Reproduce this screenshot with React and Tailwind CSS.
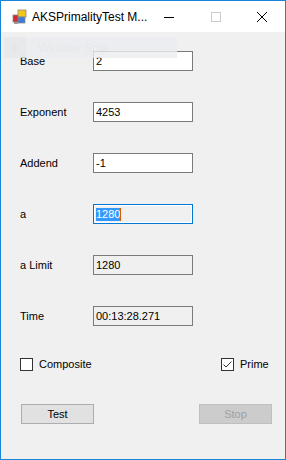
const font = { fontFamily: '"Liberation Sans", Arial, sans-serif' };

const Field = ({ label, value, variant = 'normal' }) => (
  <div className="flex items-center h-5">
    <div className="w-[73px] text-[11px] text-black pl-[19px] box-content">{label}</div>
    {variant === 'focus' ? (
      <div className="w-[100px] h-5 border border-[#0078d7] bg-[#f0f0f0] flex items-center pl-[2px] shadow-[inset_0_0_0_1px_#ffffff]">
        <span className="bg-[#3399ff] text-white text-[11px] leading-[13px]">{value}</span>
        <span className="w-px h-[13px] bg-[#e05a00]" />
      </div>
    ) : (
      <div
        className={
          'w-[100px] h-5 border border-[#7a7a7a] flex items-center pl-[2px] text-[11px] text-black ' +
          (variant === 'readonly' ? 'bg-[#f0f0f0]' : 'bg-white')
        }
      >
        {value}
      </div>
    )}
  </div>
);

const CheckBox = ({ label, checked }) => (
  <div className="flex items-center gap-[6px] h-[13px]">
    <div className="w-[13px] h-[13px] border border-[#333333] bg-white flex items-center justify-center">
      {checked && (
        <svg width="11" height="11" viewBox="0 0 11 11">
          <path d="M1.5 5.5 L4 8 L9.5 2.5" fill="none" stroke="#333333" strokeWidth="1" />
        </svg>
      )}
    </div>
    <span className="text-[11px] text-black">{label}</span>
  </div>
);

export default function App() {
  return (
    <div style={font} className="w-[286px] h-[460px] border border-[#1883d7] flex flex-col relative overflow-hidden">
      <div className="h-[31px] bg-white flex items-center shrink-0">
        <svg width="16" height="16" viewBox="0 0 16 16" className="ml-[11px]">
          <rect x="1" y="6" width="6" height="7" fill="#d42b2b" stroke="#8a8a8a" strokeWidth="0.8" />
          <rect x="6" y="1" width="8" height="7" fill="#f5c518" stroke="#8a8a8a" strokeWidth="0.8" />
          <rect x="6" y="8" width="7" height="6" fill="#3b7dd8" stroke="#8a8a8a" strokeWidth="0.8" />
          <rect x="2" y="13" width="4" height="2" fill="#9a9a9a" />
        </svg>
        <span className="ml-[4px] text-[12px] text-black w-[120px]">AKSPrimalityTest M...</span>
        <svg width="12" height="12" viewBox="0 0 12 12" className="ml-[11px]">
          <path d="M1 6.5 H11" stroke="#000" strokeWidth="1" />
        </svg>
        <svg width="12" height="12" viewBox="0 0 12 12" className="ml-[35px]">
          <rect x="1.5" y="1.5" width="9" height="9" fill="none" stroke="#cccccc" strokeWidth="1" />
        </svg>
        <svg width="12" height="12" viewBox="0 0 12 12" className="ml-[34px]">
          <path d="M1 1 L11 11 M11 1 L1 11" stroke="#000" strokeWidth="1" />
        </svg>
      </div>

      <div className="flex-1 bg-[#f0f0f0] flex flex-col pt-[19px]">
        <div className="flex flex-col gap-[31px]">
          <Field label="Base" value="2" />
          <Field label="Exponent" value="4253" />
          <Field label="Addend" value="-1" />
          <Field label="a" value="1280" variant="focus" />
          <Field label="a Limit" value="1280" variant="readonly" />
          <Field label="Time" value="00:13:28.271" variant="readonly" />
        </div>

        <div className="flex mt-[32px] pl-[19px]">
          <div className="w-[201px]">
            <CheckBox label="Composite" />
          </div>
          <CheckBox label="Prime" checked />
        </div>

        <div className="flex justify-between mt-[33px] pl-[20px] pr-[13px]">
          <button className="w-[73px] h-[20px] border border-[#adadad] bg-[#e1e1e1] text-[11px] text-black">Test</button>
          <button className="w-[73px] h-[20px] border border-[#bfbfbf] bg-[#cccccc] text-[11px] text-[#a0a0a0]">Stop</button>
        </div>
      </div>

      <div className="absolute left-[3px] top-[36px] w-[173px] h-[21px] bg-[#ebedf0] flex items-center opacity-80">
        <div className="w-[22px] h-[21px] bg-[#e6e8eb] flex items-center justify-center">
          <div className="w-[6px] h-[6px] rounded-full bg-[#e2e3e5]" />
        </div>
        <span className="ml-[12px] text-[12px] text-[#e6e7e9]">Window Snip</span>
      </div>
    </div>
  );
}
